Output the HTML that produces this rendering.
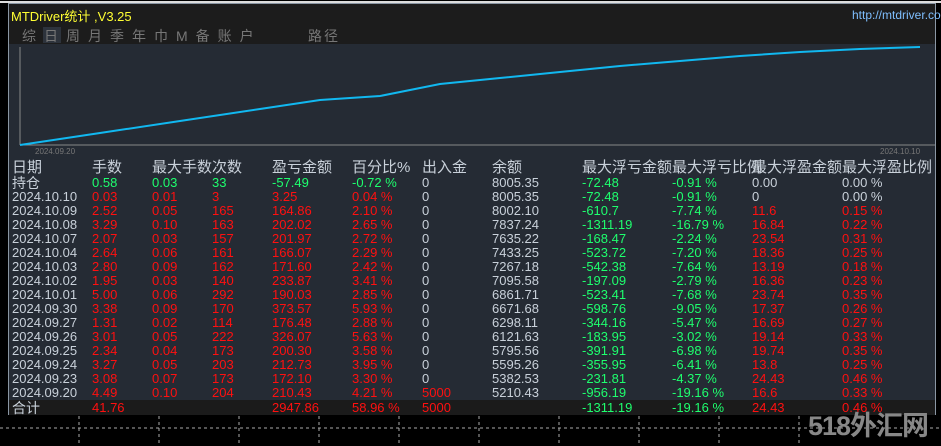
<!DOCTYPE html>
<html><head><meta charset="utf-8"><style>
*{margin:0;padding:0}
body{width:941px;height:446px;background:#000;position:relative;overflow:hidden;font-family:"Liberation Sans","Noto Sans CJK SC",sans-serif}
.a{position:absolute;white-space:nowrap}
#panel{position:absolute;left:8px;top:3px;width:928px;height:412px;background:#252b34;border:1px solid #8a96a3;box-sizing:border-box}
#hdr{position:absolute;left:9px;top:4px;width:926px;height:40px;background:#1c1c1c}
.r{position:absolute;left:0;width:941px;height:14px;font-size:13px;line-height:14px}
.r span{position:absolute;top:0}
.w{color:#c9d1da}.g{color:#1eff6e}.d{color:#ff1010}
.h{font-size:15px;color:#c9d1da}
</style></head><body>
<div class="a" style="left:0;top:1px;width:941px;height:2px;background:#ddd"></div>
<div id="panel"></div>
<div id="hdr"></div>
<div class="a" style="left:11px;top:6px;font-size:13px;color:#ffff33">MTDriver统计 ,V3.25</div>
<div class="a" style="left:852px;top:8px;font-size:12px;color:#7fbfff">http://mtdriver.com</div>
<div class="a" style="left:43px;top:27px;width:18px;height:16px;background:#2d333c"></div>
<div class="a" style="left:22px;top:26px;font-size:14px;color:#777;letter-spacing:8px">综日周月季年巾M备账户</div>
<div class="a" style="left:308px;top:26px;font-size:14px;color:#777;letter-spacing:2px">路径</div>
<svg class="a" style="left:0;top:0" width="941" height="446">
<line x1="20" y1="47" x2="20" y2="145" stroke="#888" stroke-width="1"/>
<line x1="20" y1="145" x2="935" y2="145" stroke="#888" stroke-width="1"/>
<polyline fill="none" stroke="#11b8f0" stroke-width="2" points="20,145 100,133 180,121 260,109 320,100 380,96 440,84 500,78 560,72 620,66 680,61 740,56 800,52 860,49 920,47"/>
<g stroke="#aaa" stroke-dasharray="3,3"><line x1="0" y1="428" x2="941" y2="428"/>
<line x1="79" y1="416" x2="79" y2="446"/><line x1="159" y1="416" x2="159" y2="446"/><line x1="239" y1="416" x2="239" y2="446"/><line x1="319" y1="416" x2="319" y2="446"/><line x1="399" y1="416" x2="399" y2="446"/><line x1="479" y1="416" x2="479" y2="446"/><line x1="559" y1="416" x2="559" y2="446"/><line x1="639" y1="416" x2="639" y2="446"/><line x1="719" y1="416" x2="719" y2="446"/><line x1="799" y1="416" x2="799" y2="446"/></g>
</svg>
<div class="a" style="left:35px;top:147px;font-size:8px;color:#777">2024.09.20</div>
<div class="a" style="left:880px;top:147px;font-size:8px;color:#777">2024.10.10</div>
<div class="a" style="left:9px;top:400px;width:926px;height:15px;background:#1b1b1b"></div>
<div class="r h" style="top:161px;height:16px"><span style="left:12px">日期</span><span style="left:92px">手数</span><span style="left:152px">最大手数次数</span><span style="left:272px">盈亏金额</span><span style="left:352px">百分比%</span><span style="left:422px">出入金</span><span style="left:492px">余额</span><span style="left:582px">最大浮亏金额</span><span style="left:672px">最大浮亏比例</span><span style="left:752px">最大浮盈金额</span><span style="left:842px">最大浮盈比例</span></div>
<div class="r" style="top:176px"><span class="w" style="left:12px;font-size:14px">持仓</span><span class="g" style="left:92px">0.58</span><span class="g" style="left:152px">0.03</span><span class="g" style="left:212px">33</span><span class="g" style="left:272px">-57.49</span><span class="g" style="left:352px">-0.72 %</span><span class="w" style="left:422px">0</span><span class="w" style="left:492px">8005.35</span><span class="g" style="left:582px">-72.48</span><span class="g" style="left:672px">-0.91 %</span><span class="w" style="left:752px">0.00</span><span class="w" style="left:842px">0.00 %</span></div>
<div class="r" style="top:190px"><span class="w" style="left:12px">2024.10.10</span><span class="d" style="left:92px">0.03</span><span class="d" style="left:152px">0.01</span><span class="d" style="left:212px">3</span><span class="d" style="left:272px">3.25</span><span class="d" style="left:352px">0.04 %</span><span class="w" style="left:422px">0</span><span class="w" style="left:492px">8005.35</span><span class="g" style="left:582px">-72.48</span><span class="g" style="left:672px">-0.91 %</span><span class="w" style="left:752px">0</span><span class="w" style="left:842px">0.00 %</span></div>
<div class="r" style="top:204px"><span class="w" style="left:12px">2024.10.09</span><span class="d" style="left:92px">2.52</span><span class="d" style="left:152px">0.05</span><span class="d" style="left:212px">165</span><span class="d" style="left:272px">164.86</span><span class="d" style="left:352px">2.10 %</span><span class="w" style="left:422px">0</span><span class="w" style="left:492px">8002.10</span><span class="g" style="left:582px">-610.7</span><span class="g" style="left:672px">-7.74 %</span><span class="d" style="left:752px">11.6</span><span class="d" style="left:842px">0.15 %</span></div>
<div class="r" style="top:218px"><span class="w" style="left:12px">2024.10.08</span><span class="d" style="left:92px">3.29</span><span class="d" style="left:152px">0.10</span><span class="d" style="left:212px">163</span><span class="d" style="left:272px">202.02</span><span class="d" style="left:352px">2.65 %</span><span class="w" style="left:422px">0</span><span class="w" style="left:492px">7837.24</span><span class="g" style="left:582px">-1311.19</span><span class="g" style="left:672px">-16.79 %</span><span class="d" style="left:752px">16.84</span><span class="d" style="left:842px">0.22 %</span></div>
<div class="r" style="top:232px"><span class="w" style="left:12px">2024.10.07</span><span class="d" style="left:92px">2.07</span><span class="d" style="left:152px">0.03</span><span class="d" style="left:212px">157</span><span class="d" style="left:272px">201.97</span><span class="d" style="left:352px">2.72 %</span><span class="w" style="left:422px">0</span><span class="w" style="left:492px">7635.22</span><span class="g" style="left:582px">-168.47</span><span class="g" style="left:672px">-2.24 %</span><span class="d" style="left:752px">23.54</span><span class="d" style="left:842px">0.31 %</span></div>
<div class="r" style="top:246px"><span class="w" style="left:12px">2024.10.04</span><span class="d" style="left:92px">2.64</span><span class="d" style="left:152px">0.06</span><span class="d" style="left:212px">161</span><span class="d" style="left:272px">166.07</span><span class="d" style="left:352px">2.29 %</span><span class="w" style="left:422px">0</span><span class="w" style="left:492px">7433.25</span><span class="g" style="left:582px">-523.72</span><span class="g" style="left:672px">-7.20 %</span><span class="d" style="left:752px">18.36</span><span class="d" style="left:842px">0.25 %</span></div>
<div class="r" style="top:260px"><span class="w" style="left:12px">2024.10.03</span><span class="d" style="left:92px">2.80</span><span class="d" style="left:152px">0.09</span><span class="d" style="left:212px">162</span><span class="d" style="left:272px">171.60</span><span class="d" style="left:352px">2.42 %</span><span class="w" style="left:422px">0</span><span class="w" style="left:492px">7267.18</span><span class="g" style="left:582px">-542.38</span><span class="g" style="left:672px">-7.64 %</span><span class="d" style="left:752px">13.19</span><span class="d" style="left:842px">0.18 %</span></div>
<div class="r" style="top:274px"><span class="w" style="left:12px">2024.10.02</span><span class="d" style="left:92px">1.95</span><span class="d" style="left:152px">0.03</span><span class="d" style="left:212px">140</span><span class="d" style="left:272px">233.87</span><span class="d" style="left:352px">3.41 %</span><span class="w" style="left:422px">0</span><span class="w" style="left:492px">7095.58</span><span class="g" style="left:582px">-197.09</span><span class="g" style="left:672px">-2.79 %</span><span class="d" style="left:752px">16.36</span><span class="d" style="left:842px">0.23 %</span></div>
<div class="r" style="top:288px"><span class="w" style="left:12px">2024.10.01</span><span class="d" style="left:92px">5.00</span><span class="d" style="left:152px">0.06</span><span class="d" style="left:212px">292</span><span class="d" style="left:272px">190.03</span><span class="d" style="left:352px">2.85 %</span><span class="w" style="left:422px">0</span><span class="w" style="left:492px">6861.71</span><span class="g" style="left:582px">-523.41</span><span class="g" style="left:672px">-7.68 %</span><span class="d" style="left:752px">23.74</span><span class="d" style="left:842px">0.35 %</span></div>
<div class="r" style="top:302px"><span class="w" style="left:12px">2024.09.30</span><span class="d" style="left:92px">3.38</span><span class="d" style="left:152px">0.09</span><span class="d" style="left:212px">170</span><span class="d" style="left:272px">373.57</span><span class="d" style="left:352px">5.93 %</span><span class="w" style="left:422px">0</span><span class="w" style="left:492px">6671.68</span><span class="g" style="left:582px">-598.76</span><span class="g" style="left:672px">-9.05 %</span><span class="d" style="left:752px">17.37</span><span class="d" style="left:842px">0.26 %</span></div>
<div class="r" style="top:316px"><span class="w" style="left:12px">2024.09.27</span><span class="d" style="left:92px">1.31</span><span class="d" style="left:152px">0.02</span><span class="d" style="left:212px">114</span><span class="d" style="left:272px">176.48</span><span class="d" style="left:352px">2.88 %</span><span class="w" style="left:422px">0</span><span class="w" style="left:492px">6298.11</span><span class="g" style="left:582px">-344.16</span><span class="g" style="left:672px">-5.47 %</span><span class="d" style="left:752px">16.69</span><span class="d" style="left:842px">0.27 %</span></div>
<div class="r" style="top:330px"><span class="w" style="left:12px">2024.09.26</span><span class="d" style="left:92px">3.01</span><span class="d" style="left:152px">0.05</span><span class="d" style="left:212px">222</span><span class="d" style="left:272px">326.07</span><span class="d" style="left:352px">5.63 %</span><span class="w" style="left:422px">0</span><span class="w" style="left:492px">6121.63</span><span class="g" style="left:582px">-183.95</span><span class="g" style="left:672px">-3.02 %</span><span class="d" style="left:752px">19.14</span><span class="d" style="left:842px">0.33 %</span></div>
<div class="r" style="top:344px"><span class="w" style="left:12px">2024.09.25</span><span class="d" style="left:92px">2.34</span><span class="d" style="left:152px">0.04</span><span class="d" style="left:212px">173</span><span class="d" style="left:272px">200.30</span><span class="d" style="left:352px">3.58 %</span><span class="w" style="left:422px">0</span><span class="w" style="left:492px">5795.56</span><span class="g" style="left:582px">-391.91</span><span class="g" style="left:672px">-6.98 %</span><span class="d" style="left:752px">19.74</span><span class="d" style="left:842px">0.35 %</span></div>
<div class="r" style="top:358px"><span class="w" style="left:12px">2024.09.24</span><span class="d" style="left:92px">3.27</span><span class="d" style="left:152px">0.05</span><span class="d" style="left:212px">203</span><span class="d" style="left:272px">212.73</span><span class="d" style="left:352px">3.95 %</span><span class="w" style="left:422px">0</span><span class="w" style="left:492px">5595.26</span><span class="g" style="left:582px">-355.95</span><span class="g" style="left:672px">-6.41 %</span><span class="d" style="left:752px">13.8</span><span class="d" style="left:842px">0.25 %</span></div>
<div class="r" style="top:372px"><span class="w" style="left:12px">2024.09.23</span><span class="d" style="left:92px">3.08</span><span class="d" style="left:152px">0.07</span><span class="d" style="left:212px">173</span><span class="d" style="left:272px">172.10</span><span class="d" style="left:352px">3.30 %</span><span class="w" style="left:422px">0</span><span class="w" style="left:492px">5382.53</span><span class="g" style="left:582px">-231.81</span><span class="g" style="left:672px">-4.37 %</span><span class="d" style="left:752px">24.43</span><span class="d" style="left:842px">0.46 %</span></div>
<div class="r" style="top:386px"><span class="w" style="left:12px">2024.09.20</span><span class="d" style="left:92px">4.49</span><span class="d" style="left:152px">0.10</span><span class="d" style="left:212px">204</span><span class="d" style="left:272px">210.43</span><span class="d" style="left:352px">4.21 %</span><span class="d" style="left:422px">5000</span><span class="w" style="left:492px">5210.43</span><span class="g" style="left:582px">-956.19</span><span class="g" style="left:672px">-19.16 %</span><span class="d" style="left:752px">16.6</span><span class="d" style="left:842px">0.33 %</span></div>
<div class="r" style="top:401px"><span class="w" style="left:12px;font-size:14px">合计</span><span class="d" style="left:92px">41.76</span><span class="d" style="left:272px">2947.86</span><span class="d" style="left:352px">58.96 %</span><span class="d" style="left:422px">5000</span><span class="g" style="left:582px">-1311.19</span><span class="g" style="left:672px">-19.16 %</span><span class="d" style="left:752px">24.43</span><span class="d" style="left:842px">0.46 %</span></div>
<div class="a" style="left:808px;top:404px;font-size:27px;font-weight:bold;color:#888;letter-spacing:-1px">518外汇网</div>
</body></html>
